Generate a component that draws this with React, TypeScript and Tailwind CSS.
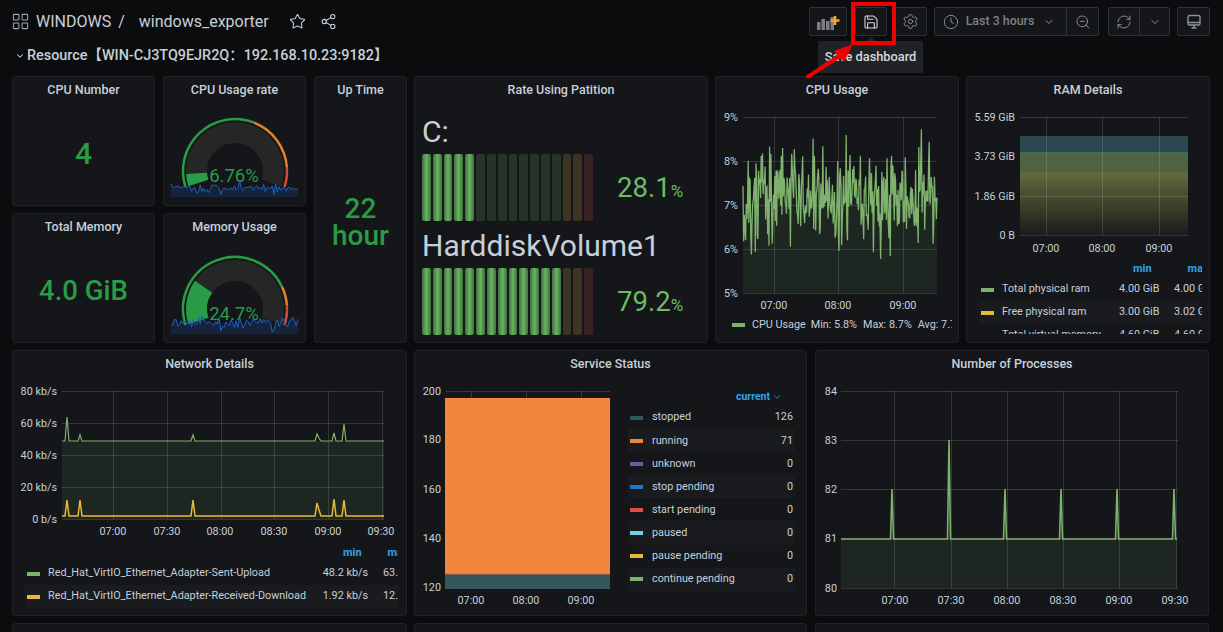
import { ReactNode } from 'react';
import { ChevronDown, Clock, LayoutGrid, RefreshCw, Save, Settings, Share2, Star, ZoomOut } from 'lucide-react';

// small seeded generator so the charts look the same on every load
function makeRandom(seed: number) {
  let s = seed;
  return () => {
    s = (s * 16807) % 2147483647;
    return (s - 1) / 2147483646;
  };
}

function noisySeries(seed: number, count: number, x0: number, x1: number, mid: number, spread: number) {
  const rand = makeRandom(seed);
  const points: [number, number][] = [];
  for (let i = 0; i < count; i++) {
    const n = (rand() + rand() + rand()) / 3 - 0.5;
    points.push([x0 + ((x1 - x0) * i) / (count - 1), mid + n * spread * 2]);
  }
  return points;
}

const toLine = (pts: [number, number][]) =>
  pts.map((p, i) => `${i ? 'L' : 'M'}${p[0].toFixed(1)} ${p[1].toFixed(1)}`).join(' ');

function arc(cx: number, cy: number, r: number, from: number, to: number) {
  const rad = (d: number) => (d * Math.PI) / 180;
  const x0 = cx + r * Math.cos(rad(from));
  const y0 = cy - r * Math.sin(rad(from));
  const x1 = cx + r * Math.cos(rad(to));
  const y1 = cy - r * Math.sin(rad(to));
  return `M${x0} ${y0} A${r} ${r} 0 ${from - to > 180 ? 1 : 0} 1 ${x1} ${y1}`;
}

function Panel({ title, className, children }: { title?: string; className: string; children?: ReactNode }) {
  return (
    <div className={`flex flex-col overflow-hidden rounded-[3px] border border-[#202226] bg-[#141619] ${className}`}>
      <div className="h-[25px] shrink-0 pt-[4px] text-center text-[12.5px] leading-[18px] font-medium text-[#c7d0d9]">{title}</div>
      {children}
    </div>
  );
}

function ToolButton({ className, children }: { className: string; children: ReactNode }) {
  return (
    <div className={`flex h-[29px] items-center justify-center border border-[#2c3235] bg-[#141619] text-[#8e9297] ${className}`}>
      {children}
    </div>
  );
}

function Grid({ xs, ys, x0, x1, y0, y1 }: { xs: number[]; ys: number[]; x0: number; x1: number; y0: number; y1: number }) {
  return (
    <g stroke="#ffffff" strokeOpacity="0.14" strokeWidth="1">
      {xs.map((x) => (
        <line key={x} x1={x + 0.5} x2={x + 0.5} y1={y0} y2={y1} />
      ))}
      {ys.map((y) => (
        <line key={y} x1={x0} x2={x1} y1={y + 0.5} y2={y + 0.5} />
      ))}
    </g>
  );
}

function AxisLabels({ x, ys, labels }: { x: number; ys: number[]; labels: string[] }) {
  return (
    <g fontSize="10.8" fill="#c7d0d9" textAnchor="end">
      {labels.map((l, i) => (
        <text key={l} x={x} y={ys[i] + 4}>
          {l}
        </text>
      ))}
    </g>
  );
}

function TimeLabels({ y, xs, labels }: { y: number; xs: number[]; labels: string[] }) {
  return (
    <g fontSize="10.8" fill="#c7d0d9" textAnchor="middle">
      {labels.map((l, i) => (
        <text key={l} x={xs[i]} y={y + 4}>
          {l}
        </text>
      ))}
    </g>
  );
}

function Gauge({ viewY, height, cy, value, greenEnd, text, seed, sparkMid, sparkSpread, sparkBase }: {
  viewY: number;
  height: number;
  cy: number;
  value: number;
  greenEnd: number;
  text: string;
  seed: number;
  sparkMid: number;
  sparkSpread: number;
  sparkBase: number;
}) {
  const start = 198;
  const sweep = 216;
  const at = (f: number) => start - sweep * f;
  const spark = noisySeries(seed, 75, 171, 298, sparkMid, sparkSpread);
  return (
    <svg viewBox={`164 ${viewY} 141 ${height}`} width="141" height={height} className="block shrink-0">
      <path d={arc(235, cy, 38.5, at(0), at(1))} fill="none" stroke="#262626" strokeWidth="21" />
      <path d={arc(235, cy, 38.5, at(0), at(value))} fill="none" stroke="#299c46" strokeWidth="21" />
      <path d={arc(235, cy, 52, at(0), at(greenEnd))} fill="none" stroke="#299c46" strokeWidth="2.5" />
      <path d={arc(235, cy, 52, at(greenEnd), at(0.9))} fill="none" stroke="#e0822a" strokeWidth="2.5" />
      <path d={arc(235, cy, 52, at(0.9), at(1))} fill="none" stroke="#d44a3a" strokeWidth="2.5" />
      <text x="234" y={cy + 11} fontSize="18.5" fill="#299c46" textAnchor="middle">
        {text}
      </text>
      <path d={`${toLine(spark)} L298 ${sparkBase} L171 ${sparkBase} Z`} fill="#1f60c4" fillOpacity="0.2" />
      <path d={toLine(spark)} fill="none" stroke="#1f60c4" strokeWidth="1" />
    </svg>
  );
}

function BarGauge({ label, lit, value }: { label: string; lit: number; value: string }) {
  const bars = Array.from({ length: 16 }, (_, i) => i);
  return (
    <div>
      <div className="h-[35px] text-[30px] leading-[33px] text-[#c7d0d9]">{label}</div>
      <div className="mt-[4px] flex h-[67px] items-center">
        <div className="flex h-full w-[171px] gap-[2px]">
          {bars.map((i) => (
            <div
              key={i}
              className={`flex-1 rounded-[2px] ${
                i < lit
                  ? 'bg-gradient-to-r from-[#41703f] via-[#68b560] to-[#41703f]'
                  : i < 13
                    ? 'bg-[#263428]'
                    : i < 15
                      ? 'bg-[#3c3522]'
                      : 'bg-[#3a2126]'
              }`}
            />
          ))}
        </div>
        <div className="mt-[4px] ml-[24px] text-[27.5px] leading-[35px] text-[#6cbd63]">
          {value}
          <span className="text-[17px]">%</span>
        </div>
      </div>
    </div>
  );
}

function CpuChart() {
  const series = noisySeries(4242, 300, 743, 937, 196, 74);
  return (
    <svg viewBox="716 102 242 210" width="242" height="210" className="block shrink-0">
      <Grid xs={[774, 838, 903]} ys={[117, 161, 205, 249, 293]} x0={743} x1={937} y0={117} y1={293} />
      <path d={`${toLine(series)} L937 293 L743 293 Z`} fill="#73bf69" fillOpacity="0.1" />
      <path d={toLine(series)} fill="none" stroke="#7eb26d" strokeWidth="1.3" />
      <AxisLabels x={738} ys={[117, 161, 205, 249, 293]} labels={['9%', '8%', '7%', '6%', '5%']} />
      <TimeLabels y={305} xs={[774, 838, 903]} labels={['07:00', '08:00', '09:00']} />
    </svg>
  );
}

function RamChart() {
  return (
    <svg viewBox="967 102 242 158" width="242" height="158" className="block shrink-0">
      <defs>
        <linearGradient id="ramFade" x1="0" x2="0" y1="0" y2="1">
          <stop offset="0" stopColor="#646a3e" />
          <stop offset="1" stopColor="#1a1c1b" />
        </linearGradient>
      </defs>
      <rect x="1020" y="136" width="168" height="16" fill="#2b4852" />
      <rect x="1020" y="152" width="168" height="3" fill="#456a50" />
      <rect x="1020" y="155" width="168" height="18" fill="#4f6342" />
      <rect x="1020" y="172" width="168" height="63" fill="url(#ramFade)" />
      <Grid xs={[1046, 1102, 1159]} ys={[117, 196, 235]} x0={1020} x1={1188} y0={117} y1={235} />
      <AxisLabels x={1015} ys={[117, 156, 196, 235]} labels={['5.59 GiB', '3.73 GiB', '1.86 GiB', '0 B']} />
      <TimeLabels y={248} xs={[1046, 1102, 1159]} labels={['07:00', '08:00', '09:00']} />
    </svg>
  );
}

function NetworkChart() {
  const green = 'M62 441 L65 441 L67 417 L69 441 L78 441 L80 435 L82 441 L191 441 L193 435 L195 441 L315 441 L317 434 L319 438 L321 441 L332 441 L334 433 L336 441 L342 441 L344 424 L346 441 L384 441';
  const yellow = 'M62 516 L65 516 L67 500 L69 516 L78 516 L80 500 L82 516 L191 516 L193 500 L195 516 L315 516 L317 503 L319 510 L321 516 L332 516 L334 499 L336 516 L342 516 L344 500 L346 516 L384 516';
  return (
    <svg viewBox="13 376 393 168" width="393" height="168" className="block shrink-0">
      <Grid xs={[113, 167, 221, 274, 328, 382]} ys={[391, 423, 455, 487, 519]} x0={62} x1={384} y0={391} y1={519} />
      <rect x="62" y="441" width="322" height="78" fill="#73bf69" fillOpacity="0.1" />
      <path d={green} fill="none" stroke="#7eb26d" strokeWidth="1.2" />
      <path d={yellow} fill="none" stroke="#eab839" strokeWidth="1.5" />
      <AxisLabels x={57} ys={[391, 423, 455, 487, 519]} labels={['80 kb/s', '60 kb/s', '40 kb/s', '20 kb/s', '0 b/s']} />
      <TimeLabels y={531} xs={[113, 167, 220, 274, 328, 381]} labels={['07:00', '07:30', '08:00', '08:30', '09:00', '09:30']} />
    </svg>
  );
}

function ServiceChart() {
  return (
    <svg viewBox="415 376 200 236" width="200" height="236" className="block shrink-0">
      <Grid xs={[471, 526, 581]} ys={[391]} x0={445} x1={610} y0={391} y1={398} />
      <rect x="445" y="398" width="165" height="176" fill="#f2853e" />
      <rect x="445" y="574" width="165" height="15" fill="#32565c" />
      <line x1="445" x2="610" y1="574" y2="574" stroke="#c8703a" />
      <AxisLabels x={441} ys={[391, 439, 489, 538, 587]} labels={['200', '180', '160', '140', '120']} />
      <TimeLabels y={600} xs={[471, 526, 581]} labels={['07:00', '08:00', '09:00']} />
    </svg>
  );
}

function ProcessChart() {
  const peaks = [892, 1005, 1061, 1117, 1174];
  let line = 'M841 539';
  [...peaks, 949].sort((a, b) => a - b).forEach((x) => {
    const top = x === 949 ? 440 : 489;
    line += ` L${x - 1.5} 539 L${x} ${top} L${x + 1.5} 539`;
  });
  line += ' L1177 539';
  return (
    <svg viewBox="816 376 392 236" width="392" height="236" className="block shrink-0">
      <Grid xs={[894, 951, 1007, 1063, 1119, 1176]} ys={[391, 440, 489, 538, 588]} x0={841} x1={1178} y0={391} y1={588} />
      <rect x="841" y="539" width="336" height="49" fill="#73bf69" fillOpacity="0.1" />
      <path d={line} fill="none" stroke="#7eb26d" strokeWidth="1.6" />
      <AxisLabels x={837} ys={[391, 440, 489, 538, 588]} labels={['84', '83', '82', '81', '80']} />
      <TimeLabels y={600} xs={[895, 951, 1007, 1063, 1119, 1175]} labels={['07:00', '07:30', '08:00', '08:30', '09:00', '09:30']} />
    </svg>
  );
}

const services: [string, string, string][] = [
  ['stopped', '126', 'bg-[#2f575e]'],
  ['running', '71', 'bg-[#ef843c]'],
  ['unknown', '0', 'bg-[#705da0]'],
  ['stop pending', '0', 'bg-[#1f78c1]'],
  ['start pending', '0', 'bg-[#e24d42]'],
  ['paused', '0', 'bg-[#6ed0e0]'],
  ['pause pending', '0', 'bg-[#eab839]'],
  ['continue pending', '0', 'bg-[#7eb26d]'],
];

function LegendRow({ color, name, min, max, striped, nameWidth, minWidth }: {
  color: string;
  name: string;
  min: string;
  max: string;
  striped?: boolean;
  nameWidth: string;
  minWidth: string;
}) {
  return (
    <div className={`flex h-[23px] shrink-0 items-center whitespace-nowrap text-[10.8px] text-[#c7d0d9] ${striped ? 'bg-[#191b1f]' : ''}`}>
      <div className={`ml-[2px] h-[4px] w-[13px] shrink-0 ${color}`} />
      <div className={`shrink-0 pl-[8px] ${nameWidth}`}>{name}</div>
      <div className={`shrink-0 text-right ${minWidth}`}>{min}</div>
      <div className="ml-[15px] shrink-0">{max}</div>
    </div>
  );
}

export default function App() {
  return (
    <div className="h-[632px] w-[1223px] overflow-hidden bg-[#0b0c0e] font-['Roboto','Noto_Sans_CJK_SC',sans-serif]">
      {/* Top bar */}
      <header className="relative flex h-[43px] items-center pr-[13px] pl-[11px]">
        <LayoutGrid size={19} strokeWidth={1.3} className="text-[#9fa7b3]" />
        <span className="ml-[6px] text-[16px] text-[#c7d0d9]">WINDOWS</span>
        <span className="ml-[7px] text-[16px] text-[#c7d0d9]">/</span>
        <span className="ml-[14px] text-[16px] text-[#c7d0d9]">windows_exporter</span>
        <Star size={17} strokeWidth={1.5} className="ml-[20px] text-[#c7d0d9]" />
        <Share2 size={17} strokeWidth={1.5} className="ml-[14px] text-[#c7d0d9]" />

        <div className="ml-auto flex items-center">
          <ToolButton className="w-[38px] rounded-[2px]">
            <svg width="24" height="18" viewBox="0 0 24 18">
              <rect x="1" y="9" width="3.5" height="8" fill="#7b7f85" />
              <rect x="5.5" y="6" width="3.5" height="11" fill="#7b7f85" />
              <rect x="10" y="8" width="3.5" height="9" fill="#7b7f85" />
              <rect x="14.5" y="4" width="3.5" height="13" fill="#7b7f85" />
              <path d="M19 3v9M14.5 7.5h9" stroke="#f5a623" strokeWidth="2.6" />
            </svg>
          </ToolButton>
          <ToolButton className="ml-[8px] w-[32px] rounded-[2px] text-[#d8d9da]">
            <Save size={16} strokeWidth={1.6} />
          </ToolButton>
          <ToolButton className="ml-[7px] w-[33px] rounded-[2px]">
            <Settings size={17} strokeWidth={1.4} />
          </ToolButton>
          <ToolButton className="ml-[7px] w-[133px] rounded-l-[2px] pr-[3px]">
            <Clock size={16} strokeWidth={1.4} />
            <span className="mr-[9px] ml-[7px] text-[12.4px] font-medium text-[#7b8087]">Last 3 hours</span>
            <ChevronDown size={12} />
          </ToolButton>
          <ToolButton className="ml-[-1px] w-[33px] rounded-r-[2px]">
            <ZoomOut size={16} strokeWidth={1.4} />
          </ToolButton>
          <ToolButton className="ml-[9px] w-[32px] rounded-l-[2px]">
            <RefreshCw size={16} strokeWidth={1.4} />
          </ToolButton>
          <ToolButton className="ml-[-1px] w-[31px] rounded-r-[2px]">
            <ChevronDown size={12} />
          </ToolButton>
          <ToolButton className="ml-[7px] w-[33px] rounded-[2px]">
            <svg width="16" height="16" viewBox="0 0 16 16" fill="none" stroke="#8e9297" strokeWidth="1.4">
              <rect x="2" y="1.5" width="12" height="9.5" rx="1.5" />
              <path d="M2 8.5h12M5.5 14h5M8 11v3" />
            </svg>
          </ToolButton>
        </div>

        {/* Tooltip under the save button */}
        <div className="absolute top-[41px] left-[818px] z-10 flex h-[32px] w-[105px] items-center justify-center rounded-[2px] bg-[#202226] text-[12.8px] font-medium whitespace-nowrap text-[#d8d9da]">
          Save dashboard
          <div className="absolute top-[-4px] left-[48px] h-0 w-0 border-x-[5px] border-b-[4px] border-x-transparent border-b-[#202226]" />
        </div>
        {/* Red annotation around the save button */}
        <div className="absolute top-[2px] left-[851px] z-20 h-[43px] w-[45px] border-[4px] border-[#f00000]" />
        <svg className="absolute top-[40px] left-[800px] z-20" width="60" height="42" viewBox="800 40 60 42">
          <path d="M805.5 76 L837 55 L834 51 L853 44 L844 62 L840.5 58 L808 79 Z" fill="#f00000" />
        </svg>
      </header>

      {/* Row title */}
      <div className="flex h-[25px] items-center pl-[15px] text-[14.4px] font-medium text-[#c7d0d9]">
        <ChevronDown size={10} strokeWidth={2.5} />
        <span className="ml-[2px]">Resource【WIN-CJ3TQ9EJR2Q：192.168.10.23:9182】</span>
      </div>

      {/* Dashboard grid */}
      <div className="mt-[8px] flex flex-col gap-[7px] pl-[12px]">
        <div className="flex h-[267px] gap-[7px]">
          <div className="flex w-[143px] flex-col gap-[7px]">
            <Panel title="CPU Number" className="h-[130px]">
              <div className="pt-[34px] text-center text-[30px] leading-[35px] font-medium text-[#299c46]">4</div>
            </Panel>
            <Panel title="Total Memory" className="h-[130px]">
              <div className="pt-[34px] text-center text-[27.5px] leading-[35px] font-medium text-[#299c46]">4.0 GiB</div>
            </Panel>
          </div>
          <div className="ml-[1px] flex w-[143px] flex-col gap-[7px]">
            <Panel title="CPU Usage rate" className="h-[130px]">
              <Gauge viewY={102} height={103} cy={171} value={0.0676} greenEnd={0.6} text="6.76%" seed={11} sparkMid={188} sparkSpread={8} sparkBase={197} />
            </Panel>
            <Panel title="Memory Usage" className="h-[130px]">
              <Gauge viewY={239} height={102} cy={309} value={0.247} greenEnd={0.8} text="24.7%" seed={37} sparkMid={323} sparkSpread={10} sparkBase={334} />
            </Panel>
          </div>
          <Panel title="Up Time" className="ml-[1px] h-[267px] w-[93px]">
            <div className="pt-[93px] text-center text-[28px] leading-[27px] font-medium text-[#299c46]">
              22
              <br />
              hour
            </div>
          </Panel>
          <Panel title="Rate Using Patition" className="h-[267px] w-[294px]">
            <div className="flex flex-col gap-[8px] pt-[13px] pl-[7px]">
              <BarGauge label="C:" lit={5} value="28.1" />
              <BarGauge label="HarddiskVolume1" lit={13} value="79.2" />
            </div>
          </Panel>
          <Panel title="CPU Usage" className="h-[267px] w-[244px]">
            <CpuChart />
            <div className="mt-[5px] flex w-[236px] shrink-0 items-center overflow-hidden pl-[16px] text-[10.8px] leading-[16px] whitespace-nowrap text-[#c7d0d9]">
              <div className="h-[4px] w-[13px] shrink-0 bg-[#7eb26d]" />
              <span className="ml-[7px]">CPU Usage</span>
              <span className="ml-[5px]">Min: 5.8%</span>
              <span className="ml-[6px]">Max: 8.7%</span>
              <span className="ml-[6px]">Avg: 7.7%</span>
            </div>
          </Panel>
          <Panel title="RAM Details" className="h-[267px] w-[244px]">
            <RamChart />
            <div className="ml-[12px] flex h-[74px] w-[223px] shrink-0 flex-col overflow-hidden">
              <div className="flex h-[18px] shrink-0 items-center text-[11px] font-bold whitespace-nowrap text-[#33a2e5]">
                <span className="ml-[154px]">min</span>
                <span className="ml-[36px]">max</span>
              </div>
              <LegendRow color="bg-[#7eb26d]" name="Total physical ram" min="4.00 GiB" max="4.00 GiB" nameWidth="w-[125px]" minWidth="w-[40px]" />
              <LegendRow color="bg-[#eab839]" name="Free physical ram" min="3.00 GiB" max="3.02 GiB" striped nameWidth="w-[125px]" minWidth="w-[40px]" />
              <LegendRow color="bg-[#6ed0e0]" name="Total virtual memory" min="4.60 GiB" max="4.60 GiB" nameWidth="w-[125px]" minWidth="w-[40px]" />
            </div>
          </Panel>
        </div>

        <div className="flex h-[266px] gap-[7px]">
          <Panel title="Network Details" className="h-[266px] w-[395px]">
            <NetworkChart />
            <div className="ml-[12px] flex w-[373px] shrink-0 flex-col overflow-hidden">
              <div className="flex h-[18px] items-center text-[11px] font-bold whitespace-nowrap text-[#33a2e5]">
                <span className="ml-[318px]">min</span>
                <span className="ml-[26px]">max</span>
              </div>
              <LegendRow color="bg-[#7eb26d]" name="Red_Hat_VirtIO_Ethernet_Adapter-Sent-Upload" min="48.2 kb/s" max="63.7 kb/s" nameWidth="w-[280px]" minWidth="w-[48px]" />
              <LegendRow color="bg-[#eab839]" name="Red_Hat_VirtIO_Ethernet_Adapter-Received-Download" min="1.92 kb/s" max="12.3 kb/s" striped nameWidth="w-[280px]" minWidth="w-[48px]" />
            </div>
          </Panel>
          <Panel title="Service Status" className="h-[266px] w-[393px]">
            <div className="flex">
              <ServiceChart />
              <div className="ml-[13px] flex w-[167px] flex-col text-[10.8px] text-[#c7d0d9]">
                <div className="flex h-[30px] items-center justify-end pt-[11px] pr-[13px] text-[10.5px] font-bold text-[#33a2e5]">
                  current
                  <ChevronDown size={10} className="ml-[2px]" />
                </div>
                {services.map(([name, count, color], i) => (
                  <div key={name} className={`flex h-[23.1px] items-center pr-[2px] ${i % 2 === 1 ? 'bg-[#191b1f]' : ''}`}>
                    <div className={`ml-[2px] h-[4px] w-[13px] ${color}`} />
                    <span className="ml-[9px]">{name}</span>
                    <span className="ml-auto">{count}</span>
                  </div>
                ))}
              </div>
            </div>
          </Panel>
          <Panel title="Number of Processes" className="ml-[1px] h-[266px] w-[394px]">
            <ProcessChart />
          </Panel>
        </div>

        <div className="flex h-[30px] gap-[7px]">
          <Panel className="w-[395px]" />
          <Panel className="w-[393px]" />
          <Panel className="ml-[1px] w-[394px]" />
        </div>
      </div>
    </div>
  );
}
